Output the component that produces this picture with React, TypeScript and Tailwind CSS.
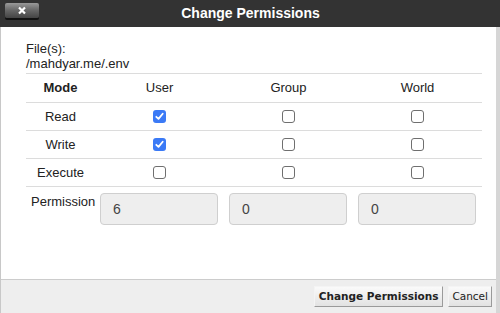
import { useState } from "react";

type Perm = { user: boolean; group: boolean; world: boolean };

const Box = ({ checked, onClick }: { checked: boolean; onClick: () => void }) => (
    <button
        onClick={onClick}
        className={
            checked
                ? "w-[13px] h-[13px] rounded-[3px] bg-[#3b7af6] flex items-center justify-center"
                : "w-[13px] h-[13px] rounded-[3px] border border-[#6f6f6f] bg-white"
        }
    >
        {checked && (
            <svg width="9" height="9" viewBox="0 0 9 9">
                <path d="M1.3 4.8 L3.5 6.9 L7.7 1.8" stroke="white" strokeWidth="1.8" fill="none" strokeLinecap="round" strokeLinejoin="round" />
            </svg>
        )}
    </button>
);

const App = () => {
    const [rows, setRows] = useState<Record<string, Perm>>({
        Read: { user: true, group: false, world: false },
        Write: { user: true, group: false, world: false },
        Execute: { user: false, group: false, world: false },
    });

    const toggle = (mode: string, who: keyof Perm) =>
        setRows({ ...rows, [mode]: { ...rows[mode], [who]: !rows[mode][who] } });

    // octal digit for each column
    const digit = (who: keyof Perm) =>
        (rows.Read[who] ? 4 : 0) + (rows.Write[who] ? 2 : 0) + (rows.Execute[who] ? 1 : 0);

    return (
        <div className="w-[500px] h-[313px] flex flex-col bg-white text-[#222] font-['Liberation_Sans',Arial,sans-serif]">
            {/* Title bar */}
            <div className="h-[27px] bg-[#333333] relative flex items-center justify-center shrink-0">
                <button className="absolute left-[5px] top-[3px] w-[34px] h-[15px] rounded-[2px] bg-gradient-to-b from-[#9a9a9a] via-[#666] to-[#444] shadow-[0_2px_0_#111] flex items-center justify-center">
                    <svg width="10" height="9" viewBox="0 0 10 9">
                        <path d="M2 1.5 L8 7.5 M8 1.5 L2 7.5" stroke="white" strokeWidth="2.2" />
                    </svg>
                </button>
                <h1 className="text-white font-bold text-[14px] ml-[1px]">Change Permissions</h1>
            </div>

            <div className="flex-1 flex flex-col border-l border-[#c8c8c8] border-r-4 border-r-[#d6d6d6]">
                {/* Body */}
                <div className="flex-1 pl-[25px] pr-[14px] pt-[14px] text-[13px]">
                    <div className="leading-[15px]">File(s):</div>
                    <div className="leading-[15px]">/mahdyar.me/.env</div>

                    <div className="mt-[2px] border-t border-[#dcdcdc]">
                        <div className="flex h-[29px] items-center border-b border-[#dcdcdc]">
                            <div className="w-[69px] text-center font-bold">Mode</div>
                            <div className="w-[129px] text-center">User</div>
                            <div className="w-[129px] text-center">Group</div>
                            <div className="w-[129px] text-center">World</div>
                        </div>
                        {Object.keys(rows).map((mode) => (
                            <div key={mode} className="flex h-[28px] items-center border-b border-[#dcdcdc]">
                                <div className="w-[69px] text-center">{mode}</div>
                                {(["user", "group", "world"] as (keyof Perm)[]).map((who) => (
                                    <div key={who} className="w-[129px] flex justify-center">
                                        <Box checked={rows[mode][who]} onClick={() => toggle(mode, who)} />
                                    </div>
                                ))}
                            </div>
                        ))}
                    </div>

                    {/* Octal values */}
                    <div className="flex mt-[6px]">
                        <div className="w-[74px] pl-[5px] leading-[15px] pt-[1px]">Permission</div>
                        <div className="flex gap-[11px]">
                            {(["user", "group", "world"] as (keyof Perm)[]).map((who) => (
                                <div
                                    key={who}
                                    className="w-[118px] h-[32px] rounded-[4px] border border-[#cfcfcf] bg-[#eeeeee] flex items-center pl-[12px] text-[14px] text-[#444]"
                                >
                                    {digit(who)}
                                </div>
                            ))}
                        </div>
                    </div>
                </div>

                {/* Footer */}
                <div className="h-[34px] shrink-0 bg-[#eeeeee] border-t border-[#cccccc] flex items-center justify-end gap-[5px] pr-[4px] font-['DejaVu_Sans',Verdana,sans-serif] text-[10.5px] text-[#222]">
                    <button className="h-[21px] px-[4px] bg-gradient-to-b from-[#fafafa] to-[#e2e2e2] border border-t-[#f4f4f4] border-l-[#f4f4f4] border-b-[#9a9a9a] border-r-[#9a9a9a] font-bold">
                        Change Permissions
                    </button>
                    <button className="h-[21px] px-[3px] bg-gradient-to-b from-[#fafafa] to-[#e2e2e2] border border-t-[#f4f4f4] border-l-[#f4f4f4] border-b-[#9a9a9a] border-r-[#9a9a9a]">
                        Cancel
                    </button>
                </div>
            </div>
        </div>
    );
};

export default App;
